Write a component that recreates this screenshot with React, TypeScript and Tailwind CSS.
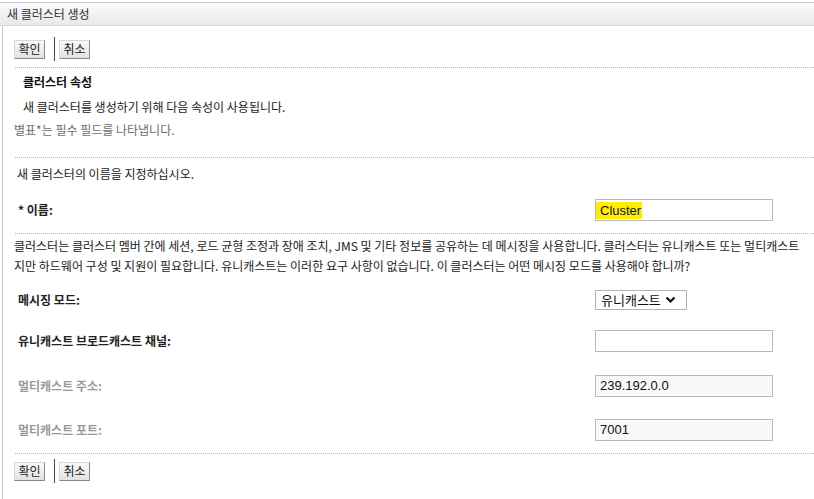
import React from 'react';

function Btn({ label }: { label: string }) {
  return (
    <button className="h-[19px] w-[31px] border border-t-[#d8d8d8] border-l-[#d8d8d8] border-r-[#8a8a8a] border-b-[#8a8a8a] bg-gradient-to-b from-[#fafafa] to-[#e2e2e2] text-[12px] leading-none text-[#222]">
      {label}
    </button>
  );
}

function ButtonBar() {
  return (
    <div className="flex items-center h-[24px]">
      <Btn label="확인" />
      <div className="ml-[9px] mr-[4px] h-[24px] w-px bg-[#444]" />
      <Btn label="취소" />
    </div>
  );
}

function Dotted() {
  return <div className="ml-[1px] border-t border-dotted border-[#b5b5b5]" />;
}

function Box({ children, dim }: { children?: React.ReactNode; dim?: boolean }) {
  return (
    <div
      className={`h-[22px] w-[178px] border border-[#b8b8b8] flex items-center px-[4px] font-['Liberation_Sans',sans-serif] text-[13px] text-[#111] ${
        dim ? 'bg-[#f8f8f8]' : 'bg-white'
      }`}
    >
      {children}
    </div>
  );
}

function Row({ label, h, dim, children }: { label: string; h: string; dim?: boolean; children: React.ReactNode }) {
  return (
    <div className={`grid grid-cols-[581px_1fr] items-center ${h}`}>
      <div className={`pl-[4px] font-bold ${dim ? 'text-[#9a9a9a]' : 'text-[#222]'}`}>{label}</div>
      <div>{children}</div>
    </div>
  );
}

export default function App() {
  return (
    <div className="w-[814px] h-[499px] overflow-hidden bg-white font-['Noto_Sans_CJK_KR',sans-serif] text-[12px] text-[#222]">
      <div className="h-[24px] mt-[2px] border-t border-[#c5c9cd] border-b border-b-[#dadada] bg-gradient-to-b from-[#fbfbfb] to-[#e9e9e9] flex items-center pl-[7px] text-[#2a2f3a]">
        새 클러스터 생성
      </div>
      <div className="ml-[2px] border-l border-[#c4c4c4] pl-[11px] h-[473px]">
        <div className="pt-[11px] h-[41px]">
          <ButtonBar />
        </div>
        <Dotted />
        <div className="h-[28px] flex items-center pl-[9px] font-bold text-[#111]">클러스터 속성</div>
        <div className="h-[22px] flex items-center pl-[9px]">새 클러스터를 생성하기 위해 다음 속성이 사용됩니다.</div>
        <div className="h-[24px] flex items-center text-[#6d6d6d]">별표*는 필수 필드를 나타냅니다.</div>
        <div className="h-[15px]" />
        <Dotted />
        <div className="h-[32px] flex items-center pl-[3px]">새 클러스터의 이름을 지정하십시오.</div>
        <Row label="* 이름:" h="h-[40px]">
          <Box>
            <span className="bg-[#ffee00] -ml-[4px] pl-[4px] pr-[1px] leading-[17px]">Cluster</span>
          </Box>
        </Row>
        <div className="h-[3px]" />
        <Dotted />
        <div className="pt-[2px] leading-[20px] whitespace-nowrap">
          <div>
            클러스터는 클러스터 멤버 간에 세션, 로드 균형 조정과 장애 조치, JMS 및 기타 정보를 공유하는 데 메시징을 사용합니다. 클러스터는 유니캐스트 또는 멀티캐스트
          </div>
          <div>지만 하드웨어 구성 및 지원이 필요합니다. 유니캐스트는 이러한 요구 사항이 없습니다. 이 클러스터는 어떤 메시징 모드를 사용해야 합니까?</div>
        </div>
        <div className="h-[4px]" />
        <Row label="메시징 모드:" h="h-[40px]">
          <div className="h-[20px] w-[92px] border border-[#b4b4b4] flex items-center pl-[5px] gap-[4px] text-[13px] text-[#111]">
            유니캐스트
            <svg width="11" height="8" viewBox="0 0 11 8">
              <path d="M1.5 1.5 L5.5 5.5 L9.5 1.5" fill="none" stroke="#111" strokeWidth="2.2" />
            </svg>
          </div>
        </Row>
        <Row label="유니캐스트 브로드캐스트 채널:" h="h-[42px]">
          <Box />
        </Row>
        <Row label="멀티캐스트 주소:" h="h-[48px]" dim>
          <Box dim>239.192.0.0</Box>
        </Row>
        <Row label="멀티캐스트 포트:" h="h-[40px]" dim>
          <Box dim>7001</Box>
        </Row>
        <div className="h-[3px]" />
        <Dotted />
        <div className="pt-[5px]">
          <ButtonBar />
        </div>
      </div>
    </div>
  );
}
